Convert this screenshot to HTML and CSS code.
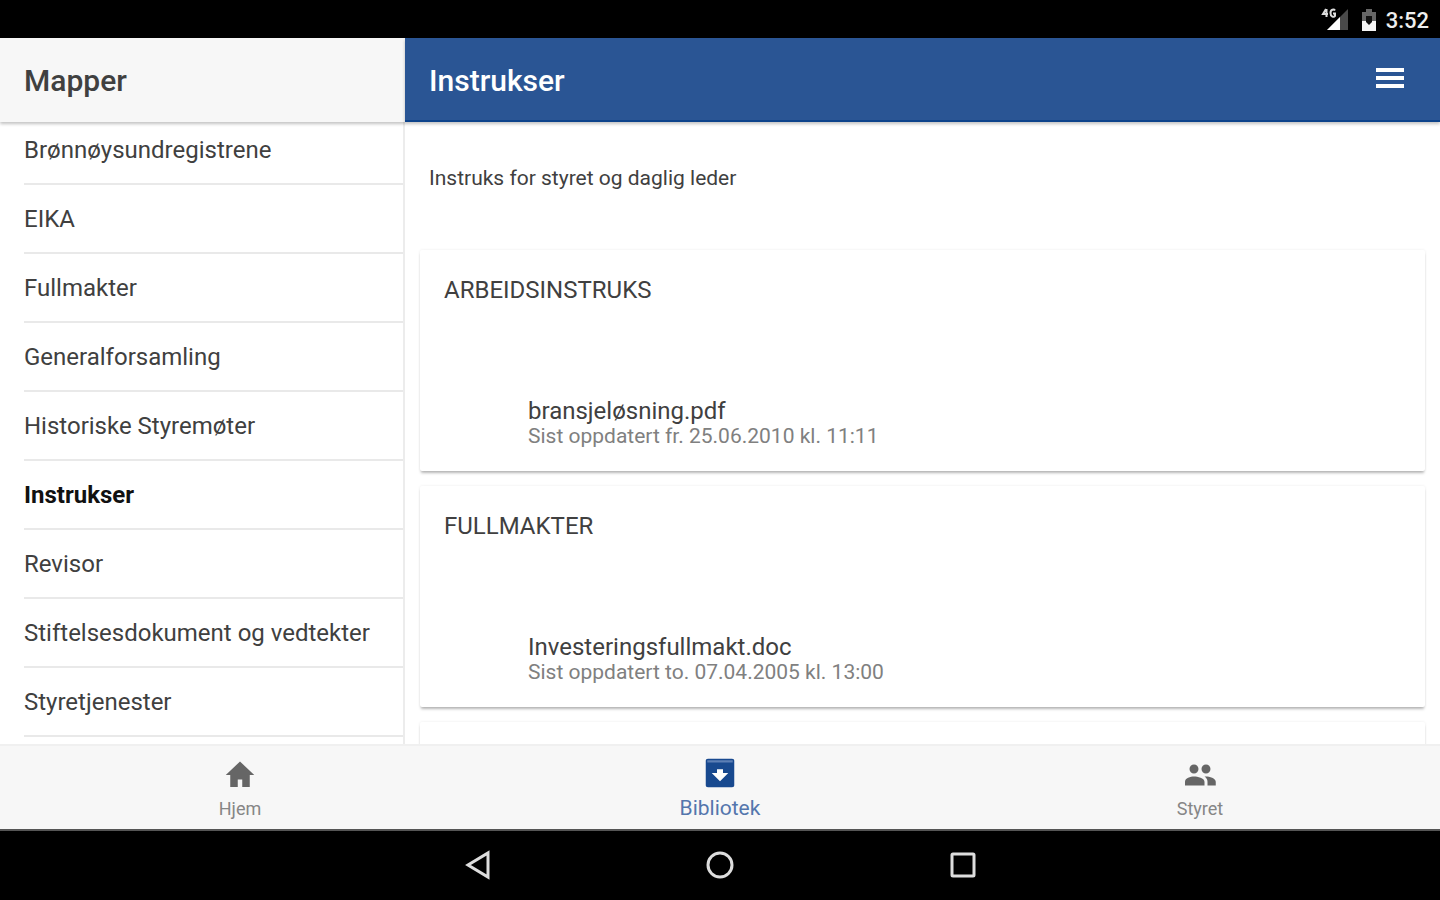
FILE: index.html
```html
<!DOCTYPE html>
<html lang="no">
<head>
  <meta charset="UTF-8" />
  <meta name="viewport" content="width=device-width, initial-scale=1.0"/>
  <title>Instrukser</title>
  <link rel="stylesheet" href="styles.css">
</head>
<body>

  <div class="status-bar">
    <svg class="signal" width="28" height="26" viewBox="0 0 28 26" aria-hidden="true">
      <path d="M27 2v21H6z" fill="#4a4a4a"/>
      <path d="M19 10v13H6z" fill="#fff"/>
      <path d="M5 2L2 7h5M5.500 2v8M14 3.500C13 2 9.500 2 9.500 6s3.500 4.500 4.500 3V6.500h-2" fill="none" stroke="#ddd" stroke-width="2"/>
    </svg>
    <svg class="battery" width="16" height="24" viewBox="0 0 16 24" aria-hidden="true">
      <path d="M5 1h6v3h4v19H1V4h4z" fill="#666"/>
      <path d="M1 13h14v10H1z" fill="#f5f5f5"/>
      <path d="M5 8h6v6l-3 3-3-3z" fill="#111"/>
    </svg>
    <span class="clock">3:52</span>
  </div>

  <div class="content">
    <!-- Mapper -->
    <aside class="sidebar">
      <header class="toolbar">
        <h2>Mapper</h2>
      </header>
      <nav class="scroll">
        <ul class="folder-list">
          <li><a href="#">Brønnøysundregistrene</a></li>
          <li><a href="#">EIKA</a></li>
          <li><a href="#">Fullmakter</a></li>
          <li><a href="#">Generalforsamling</a></li>
          <li><a href="#">Historiske Styremøter</a></li>
          <li><a href="#" class="active">Instrukser</a></li>
          <li><a href="#">Revisor</a></li>
          <li><a href="#">Stiftelsesdokument og vedtekter</a></li>
          <li><a href="#">Styretjenester</a></li>
        </ul>
      </nav>
    </aside>

    <!-- Instrukser -->
    <main class="detail">
      <header class="toolbar toolbar-primary">
        <h1>Instrukser</h1>
        <button type="button" class="menu-btn" aria-label="Meny">
          <svg width="30" height="24" viewBox="0 0 30 24"><path d="M1 4h28M1 12h28M1 20h28" stroke="#fff" stroke-width="4"/></svg>
        </button>
      </header>
      <div class="scroll">
        <p class="intro">Instruks for styret og daglig leder</p>

        <section class="card">
          <h3>ARBEIDSINSTRUKS</h3>
          <a href="#" class="file">
            <span class="file-name">bransjeløsning.pdf</span>
            <span class="file-date">Sist oppdatert fr. 25.06.2010 kl. 11:11</span>
          </a>
        </section>

        <section class="card">
          <h3>FULLMAKTER</h3>
          <a href="#" class="file">
            <span class="file-name">Investeringsfullmakt.doc</span>
            <span class="file-date">Sist oppdatert to. 07.04.2005 kl. 13:00</span>
          </a>
        </section>

        <section class="card"></section>
      </div>
    </main>
  </div>

  <nav class="tabs">
    <a href="#" class="tab">
      <svg width="36" height="36" viewBox="0 0 24 24"><path d="M10.500 20v-5h3v5h5v-8h3L12 3 2.500 12h3v8z"/></svg>
      <span>Hjem</span>
    </a>
    <a href="#" class="tab selected">
      <svg width="36" height="36" viewBox="0 0 24 24"><path d="M4 2.500h16c1 0 1.500.5 1.500 1.500v16c0 1-.5 1.500-1.500 1.500H4c-1 0-1.500-.5-1.500-1.500V4c0-1 .5-1.500 1.500-1.500z"/><path d="M3.500 3.500h17v1.500h-17z" fill="#5c7fb5"/><path d="M10 9.500h4V12h3.500L12 17.500 6.500 12H10z" fill="#fff"/></svg>
      <span>Bibliotek</span>
    </a>
    <a href="#" class="tab">
      <svg width="36" height="36" viewBox="0 0 24 24"><path d="M16 11c1.660 0 2.990-1.340 2.990-3S17.660 5 16 5s-3 1.340-3 3 1.340 3 3 3zm-8 0c1.660 0 2.990-1.340 2.990-3S9.660 5 8 5 5 6.340 5 8s1.340 3 3 3zm0 2c-2.330 0-6 1-6 3.500V19h13v-2.500c0-2.500-4.670-3.500-7-3.500zm8 0c-.29 0-.62.020-.97.050 1.160.84 1.970 1.970 1.970 3.450V19h5.500v-2.500c0-2.330-4.170-3.500-6.500-3.500z"/></svg>
      <span>Styret</span>
    </a>
  </nav>

  <div class="nav-bar">
    <button type="button" aria-label="Tilbake">
      <svg width="32" height="32" viewBox="0 0 32 32"><path d="M27 4v24L7 16z"/></svg>
    </button>
    <button type="button" aria-label="Hjem">
      <svg width="32" height="32" viewBox="0 0 32 32"><circle cx="16" cy="16" r="12"/></svg>
    </button>
    <button type="button" aria-label="Oversikt">
      <svg width="32" height="32" viewBox="0 0 32 32"><rect x="5" y="5" width="22" height="22" rx="1"/></svg>
    </button>
  </div>

</body>
</html>
```
FILE: styles.css
```css
* {
  box-sizing: border-box;
  margin: 0;
  padding: 0;
  font-family: Roboto, sans-serif;
}
body {
  display: flex;
  flex-direction: column;
  height: 100vh;
  overflow: hidden;
  background: white;
  color: #404040;
}
a {
  color: inherit;
  text-decoration: none;
}
button {
  border: none;
  background: none;
  cursor: pointer;
}
svg {
  display: block;
}

.status-bar {
  display: flex;
  justify-content: flex-end;
  align-items: center;
  height: 38px;
  padding: 2px 11px 0;
  background: black;
  color: #eee;
}
.battery {
  margin: 0 9px 0 12px;
}
.clock {
  font-size: 22px;
  font-weight: 500;
}

.content {
  flex: 1;
  display: flex;
  min-height: 0;
}
.sidebar, .detail {
  display: flex;
  flex-direction: column;
  min-width: 0;
}
.sidebar {
  width: 405px;
}
.detail {
  flex: 1;
}
.toolbar {
  position: relative;
  display: flex;
  align-items: center;
  justify-content: space-between;
  height: 84px;
  padding: 0 24px;
  background: #f7f7f7;
  box-shadow: 0 2px 3px rgba(0, 0, 0, 0.24);
}
.toolbar h1, .toolbar h2 {
  font-size: 30px;
  font-weight: 500;
}
.toolbar-primary {
  padding-top: 2px;
  background: #2a5594;
  border-bottom: 2px solid #0d438b;
  color: white;
}
.menu-btn {
  padding: 0 11px 4px;
}
.scroll {
  flex: 1;
  min-height: 0;
  overflow: hidden;
}

.sidebar .scroll {
  border-right: 2px solid #ececec;
}
.folder-list {
  list-style: none;
  margin-top: -6px;
  padding-left: 24px;
}
.folder-list a {
  display: block;
  height: 69px;
  border-bottom: 2px solid #e9e9e9;
  font-size: 24px;
  line-height: 69px;
}
.folder-list .active {
  color: #111;
  font-weight: 700;
}

.intro {
  padding: 40px 24px 56px;
  font-size: 21px;
  line-height: 32px;
}
.card {
  height: 221px;
  margin: 0 15px 15px;
  padding: 24px;
  border-radius: 2px;
  background: white;
  box-shadow: 0 3px 3px -1px rgba(0, 0, 0, 0.28), 0 0 3px rgba(0, 0, 0, 0.08);
}
.card h3 {
  font-size: 24px;
  font-weight: 400;
  line-height: 32px;
}
.file {
  display: flex;
  flex-direction: column;
  padding: 92px 0 0 84px;
}
.file-name {
  font-size: 24px;
  line-height: 26px;
}
.file-date {
  color: #808080;
  font-size: 21px;
  line-height: 24px;
}

.tabs {
  position: relative;
  display: flex;
  height: 85px;
  border-top: 2px solid #f0f0f0;
  background: #f7f7f7;
}
.tab {
  flex: 1;
  display: flex;
  flex-direction: column;
  align-items: center;
  padding-top: 11px;
  color: #868686;
  font-size: 18px;
  line-height: 32px;
}
.tab svg {
  fill: #666;
}
.selected {
  padding-top: 9px;
  color: #5476ad;
  font-size: 21px;
  line-height: 34px;
}
.selected svg {
  fill: #18498f;
}

.nav-bar {
  display: flex;
  justify-content: center;
  align-items: center;
  gap: 211px;
  height: 71px;
  padding-bottom: 2px;
  border-top: 2px solid #555;
  background: black;
}
.nav-bar svg {
  fill: none;
  stroke: #ddd;
  stroke-width: 3;
}
```
